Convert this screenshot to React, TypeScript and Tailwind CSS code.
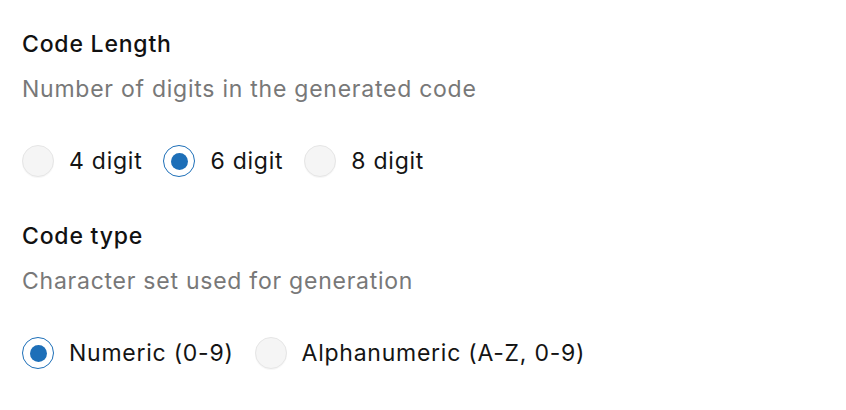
import { useState } from "react";

type Option = { value: string; label: string };

function Radio({ checked, label, onClick }: { checked: boolean; label: string; onClick: () => void }) {
  return (
    <button type="button" onClick={onClick} className="flex items-center gap-[15px]">
      <span
        className={
          checked
            ? "flex h-[32px] w-[32px] items-center justify-center rounded-full border border-[#1d6fb8] bg-white"
            : "h-[32px] w-[32px] rounded-full border border-[#e6e6e6] bg-[#f5f5f5] shadow-[0_1px_1px_rgba(0,0,0,0.04)]"
        }
      >
        {checked && <span className="h-[17px] w-[17px] rounded-full bg-[#1d6fb8]" />}
      </span>
      <span className="text-[23px] leading-[28px] tracking-[0.75px] text-[#141414]">{label}</span>
    </button>
  );
}

function Section({
  title,
  description,
  options,
  value,
  onChange,
}: {
  title: string;
  description: string;
  options: Option[];
  value: string;
  onChange: (v: string) => void;
}) {
  return (
    <div className="flex flex-col">
      <h3 className="text-[23px] leading-[28px] font-medium tracking-[0.8px] text-[#111]">{title}</h3>
      <p className="mt-[17px] text-[23px] leading-[28px] tracking-[0.75px] text-[#787878]">{description}</p>
      <div className="mt-[42px] flex items-center gap-[21px]">
        {options.map((o) => (
          <Radio key={o.value} checked={value === o.value} label={o.label} onClick={() => onChange(o.value)} />
        ))}
      </div>
    </div>
  );
}

export default function App() {
  const [length, setLength] = useState("6");
  const [type, setType] = useState("numeric");

  return (
    <div
      className="flex h-[410px] w-[846px] flex-col gap-[45px] bg-white px-[22px] pt-[30px]"
      style={{ fontFamily: "Inter, 'Noto Sans', sans-serif" }}
    >
      <Section
        title="Code Length"
        description="Number of digits in the generated code"
        options={[
          { value: "4", label: "4 digit" },
          { value: "6", label: "6 digit" },
          { value: "8", label: "8 digit" },
        ]}
        value={length}
        onChange={setLength}
      />
      <Section
        title="Code type"
        description="Character set used for generation"
        options={[
          { value: "numeric", label: "Numeric (0-9)" },
          { value: "alpha", label: "Alphanumeric (A-Z, 0-9)" },
        ]}
        value={type}
        onChange={setType}
      />
    </div>
  );
}
